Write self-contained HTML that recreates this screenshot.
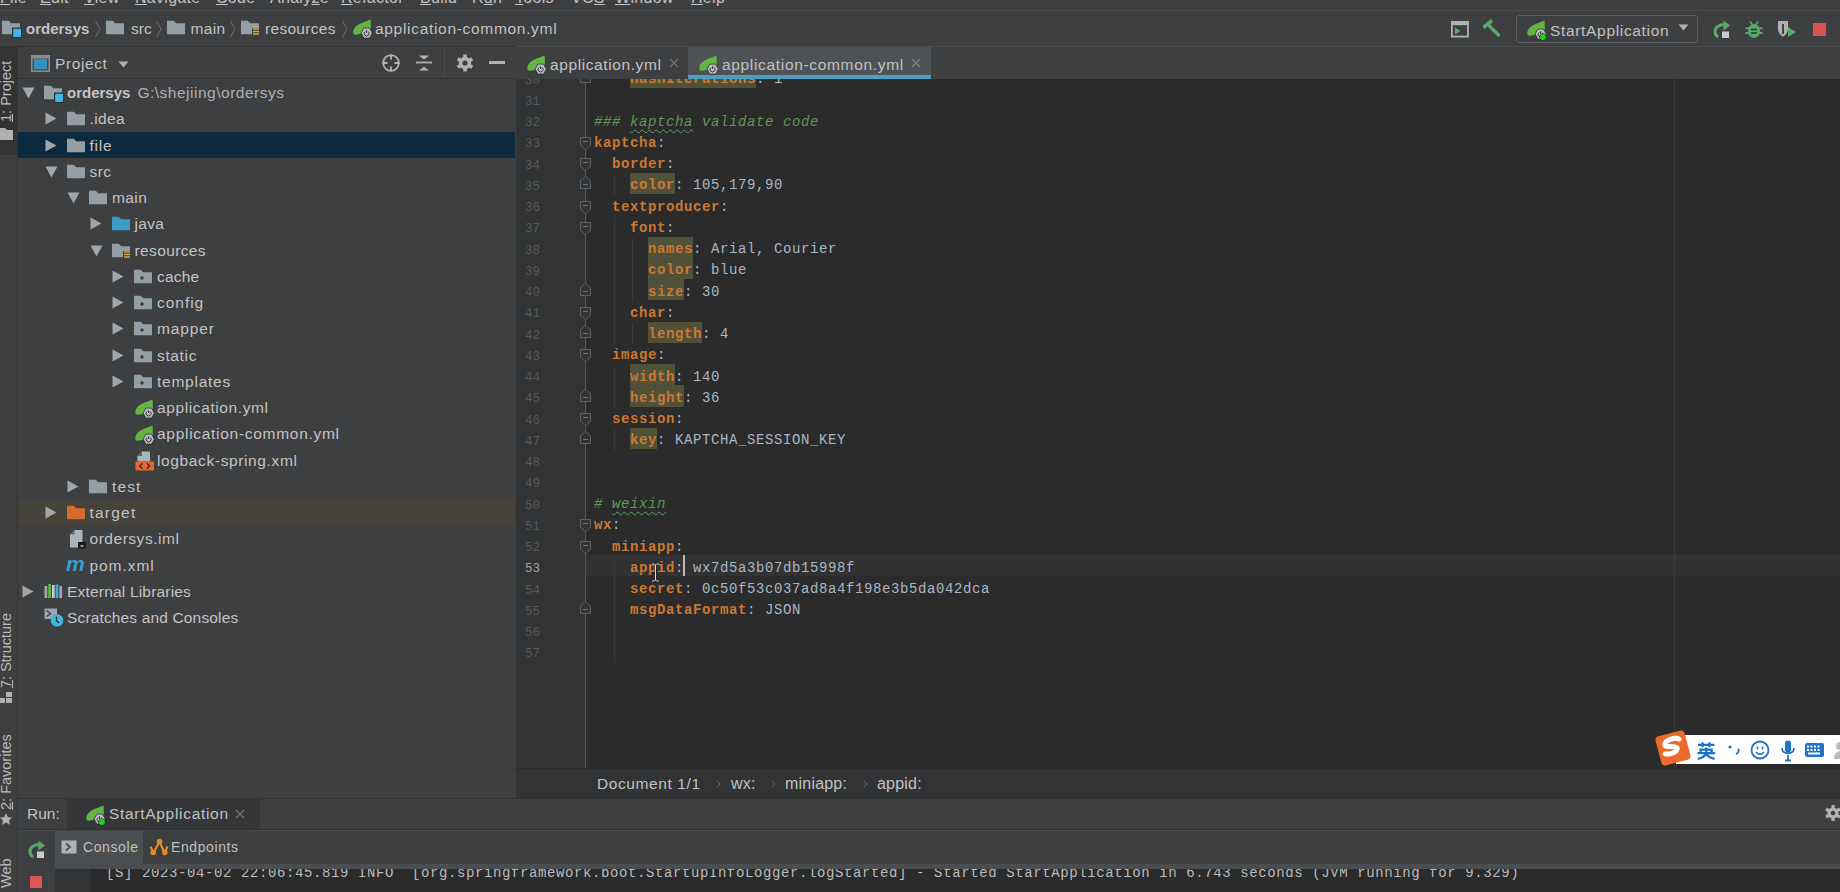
<!DOCTYPE html>
<html><head><meta charset="utf-8"><style>
*{margin:0;padding:0;box-sizing:border-box}
html,body{width:1840px;height:892px;overflow:hidden;background:#3E3F41}
body{position:relative;font-family:"Liberation Sans",sans-serif;color:#C2C2C2;font-size:16px}
.a{position:absolute}
svg{overflow:visible}
.t{position:absolute;white-space:pre;line-height:20px}
.u{text-decoration:underline;text-underline-offset:1px;text-decoration-thickness:1px}
.row{position:absolute;left:18px;width:497px;height:26.25px}
.tx{position:absolute;top:4px;white-space:pre;line-height:20px;font-size:15.5px;letter-spacing:0.3px;color:#C4C4C4}
.ic{position:absolute;top:5px;width:20px;height:17px}
.arr{position:absolute;width:12px;height:12px;top:7px}
.cl{position:absolute;left:0;height:21.25px;width:1250px;font-family:"Liberation Mono",monospace;font-size:14px;letter-spacing:0.6px;white-space:pre;line-height:21.25px}
.cl span{display:inline-block;height:21.25px;vertical-align:top}
.k{color:#CC7832;font-weight:bold}
.v{color:#A9B7C6}
.p{color:#CC7832}
.c{color:#629755;font-style:italic}
.hl{background:#4F4D3A}
.wv{text-decoration:underline wavy #659C6B;text-decoration-thickness:1px;text-underline-offset:3px}
.ln{position:absolute;left:516px;width:24px;text-align:right;font-family:"Liberation Mono",monospace;font-size:14px;color:#606366;height:21.25px;line-height:21.25px}
</style></head><body>
<svg width="0" height="0" style="position:absolute">
<defs>
<symbol id="fold" viewBox="0 0 20 17"><path d="M0 1.8h6.8l2.4 2.5H18V15.3H0z" fill="#939EA5"/></symbol>
<symbol id="foldj" viewBox="0 0 20 17"><path d="M0 1.8h6.8l2.4 2.5H18V15.3H0z" fill="#3D9BC9"/></symbol>
<symbol id="foldo" viewBox="0 0 20 17"><path d="M0 1.8h6.8l2.4 2.5H18V15.3H0z" fill="#D66A2E"/></symbol>
<symbol id="foldp" viewBox="0 0 20 17"><path d="M0 1.8h6.8l2.4 2.5H18V15.3H0z" fill="#939EA5"/><circle cx="8" cy="10" r="1.8" fill="#3E3F41"/></symbol>
<symbol id="foldr" viewBox="0 0 20 17"><path d="M0 1.8h6.8l2.4 2.5H18V15.3H0z" fill="#939EA5"/><rect x="11" y="9" width="8" height="8" fill="#3E3F41"/><path d="M12 10h6M12 12.5h6M12 15h6" stroke="#D9A343" stroke-width="1.6"/></symbol>
<symbol id="foldm" viewBox="0 0 20 17" style="overflow:visible"><path d="M0 1.8h6.8l2.4 2.5H18V15.3H0z" fill="#939EA5"/><rect x="10" y="8.5" width="10" height="10.5" fill="#2E3032"/><rect x="11.2" y="9.8" width="7.8" height="8.2" fill="#40B6E0"/></symbol>
<symbol id="spring" viewBox="0 0 20 20"><path d="M18.6 0.5C13.5 2.8 8 4 4.5 7 1.2 9.8 0.6 13.2 2.2 15.6 5 16.2 9 14.8 11.5 13.5L18.9 9.5z" fill="#62B543"/><path d="M20.3 14.1l-2.8 5h-5.6l-2.8-5 2.8-5h5.6z" fill="#B9BDC1" stroke="#303234" stroke-width="0.8"/><path d="M12.9 12.6a2.5 2.5 0 1 0 3.4 0" stroke="#2A2A2A" stroke-width="0.95" fill="none"/><path d="M14.6 11.2v2.8" stroke="#2A2A2A" stroke-width="0.95"/></symbol>
</defs></svg>
<div class="a" style="left:0;top:0;width:1840px;height:10px;overflow:hidden"><div class="t" style="left:0px;top:-12px;font-size:16px;letter-spacing:0.3px"><span class="u">F</span>ile</div><div class="t" style="left:40px;top:-12px;font-size:16px;letter-spacing:0.3px"><span class="u">E</span>dit</div><div class="t" style="left:84px;top:-12px;font-size:16px;letter-spacing:0.3px"><span class="u">V</span>iew</div><div class="t" style="left:135px;top:-12px;font-size:16px;letter-spacing:0.3px"><span class="u">N</span>avigate</div><div class="t" style="left:216px;top:-12px;font-size:16px;letter-spacing:0.3px"><span class="u">C</span>ode</div><div class="t" style="left:270px;top:-12px;font-size:16px;letter-spacing:0.3px">Analy<span class="u">z</span>e</div><div class="t" style="left:341px;top:-12px;font-size:16px;letter-spacing:0.3px"><span class="u">R</span>efactor</div><div class="t" style="left:420px;top:-12px;font-size:16px;letter-spacing:0.3px"><span class="u">B</span>uild</div><div class="t" style="left:472px;top:-12px;font-size:16px;letter-spacing:0.3px">R<span class="u">u</span>n</div><div class="t" style="left:515px;top:-12px;font-size:16px;letter-spacing:0.3px"><span class="u">T</span>ools</div><div class="t" style="left:571px;top:-12px;font-size:16px;letter-spacing:0.3px">VC<span class="u">S</span></div><div class="t" style="left:615px;top:-12px;font-size:16px;letter-spacing:0.3px"><span class="u">W</span>indow</div><div class="t" style="left:691px;top:-12px;font-size:16px;letter-spacing:0.3px"><span class="u">H</span>elp</div></div>
<div class="a" style="left:0;top:10px;width:1840px;height:1px;background:#4B4D4F"></div>
<svg class="a" style="left:2px;top:19px" width="22" height="19"><use href="#foldm" width="20" height="17"/></svg><div class="t" style="left:26px;top:19px;font-weight:bold;font-size:15px">ordersys</div><svg class="a" style="left:94px;top:19px" width="8" height="20"><path d="M1.5 2l4.5 8-4.5 8" stroke="#6E7072" stroke-width="1" fill="none"/></svg><svg class="a" style="left:106px;top:19px" width="20" height="17"><use href="#fold" width="20" height="17"/></svg><div class="t" style="left:131px;top:19px;font-size:15.5px;letter-spacing:0px">src</div><svg class="a" style="left:155px;top:19px" width="8" height="20"><path d="M1.5 2l4.5 8-4.5 8" stroke="#6E7072" stroke-width="1" fill="none"/></svg><svg class="a" style="left:167px;top:19px" width="20" height="17"><use href="#fold" width="20" height="17"/></svg><div class="t" style="left:190.5px;top:19px;font-size:15.5px;letter-spacing:0.3px">main</div><svg class="a" style="left:229px;top:19px" width="8" height="20"><path d="M1.5 2l4.5 8-4.5 8" stroke="#6E7072" stroke-width="1" fill="none"/></svg><svg class="a" style="left:241px;top:19px" width="20" height="17"><use href="#foldr" width="20" height="17"/></svg><div class="t" style="left:265px;top:19px;font-size:15.5px;letter-spacing:0.3px">resources</div><svg class="a" style="left:341px;top:19px" width="8" height="20"><path d="M1.5 2l4.5 8-4.5 8" stroke="#6E7072" stroke-width="1" fill="none"/></svg><svg class="a" style="left:352px;top:19px" width="20" height="20"><use href="#spring" width="20" height="20"/></svg><div class="t" style="left:375px;top:19px;font-size:15.5px;letter-spacing:0.69px">application-common.yml</div>
<div class="a" style="left:0;top:46px;width:1840px;height:1px;background:#323232"></div>
<svg class="a" style="left:1450px;top:20px" width="20" height="18"><rect x="1.9" y="2" width="16" height="14.6" fill="none" stroke="#AFB1B3" stroke-width="1.8"/><rect x="1" y="1.2" width="18" height="4" fill="#AFB1B3"/><path d="M5 7.5l5.5 3.5-5.5 3.5z" fill="#59A869"/></svg><svg class="a" style="left:1481px;top:19px" width="22" height="20"><path d="M2.5 8.5L11 1.5" stroke="#59A869" stroke-width="3.6" stroke-linecap="butt"/><path d="M6.5 5L18.5 17" stroke="#59A869" stroke-width="3.4" stroke-linecap="butt"/></svg><div class="a" style="left:1516px;top:15px;width:182px;height:28px;border:1px solid #5E6060;border-radius:3px"></div><svg class="a" style="left:1525.5px;top:19.5px" width="22" height="22"><use href="#spring" width="20" height="20"/><circle cx="17" cy="17" r="3.6" fill="#1E3A1E"/><circle cx="17" cy="17" r="2.9" fill="#22D322"/></svg><div class="t" style="left:1550px;top:20.5px;font-size:15.5px;letter-spacing:0.67px">StartApplication</div><svg class="a" style="left:1678px;top:24px" width="12" height="8"><path d="M0.5 0.5h10l-5 6z" fill="#AFB1B3"/></svg><svg class="a" style="left:1712px;top:20px" width="20" height="19"><path d="M14 5.2C8.5 3.8 3 6.5 3 11.5c0 2.6 1.4 4.5 3.2 5.5" stroke="#59A869" stroke-width="3" fill="none"/><path d="M11.5 0.5l6.5 5-6.5 5z" fill="#59A869"/><rect x="10" y="11.5" width="7" height="6.5" fill="#C9CBCD"/></svg><svg class="a" style="left:1745px;top:20px" width="18" height="19"><path d="M5 1.5l2.5 3.5M13 1.5l-2.5 3.5" stroke="#59A869" stroke-width="1.6"/><ellipse cx="9" cy="11" rx="6" ry="7" fill="#59A869"/><path d="M0.5 8.2h17M0.5 13h17" stroke="#59A869" stroke-width="2"/><path d="M6 9.5h6M6 13h6" stroke="#2A3A2A" stroke-width="1.6"/></svg><svg class="a" style="left:1776px;top:19px" width="22" height="20"><path d="M2 2h10v8c0 4-3 6-5 8-2-2-5-4-5-8z" fill="#AFB1B3"/><path d="M7 5v10" stroke="#3E3F41" stroke-width="2"/><path d="M12 8l8 5-8 5z" fill="#59A869"/></svg><div class="a" style="left:1812.5px;top:22.5px;width:13px;height:13px;background:#DB5050"></div>
<div class="a" style="left:17px;top:47px;width:1px;height:845px;background:#333436"></div><div class="a" style="left:0;top:47px;width:17px;height:108px;background:#313335"></div><div class="t" style="left:-1px;top:122px;font-size:14.5px;line-height:15px;transform-origin:0 0;transform:rotate(-90deg);color:#BBBBBB"><span class="u">1</span>: Project</div><svg class="a" style="left:0;top:127px" width="14" height="14"><path d="M0 1h5l2 2h6v10H0z" fill="#AFB1B3"/></svg><div class="t" style="left:-1px;top:688px;font-size:14.5px;line-height:15px;transform-origin:0 0;transform:rotate(-90deg);color:#BBBBBB"><span class="u">7</span>: Structure</div><svg class="a" style="left:0;top:690px" width="14" height="16"><rect x="6" y="2" width="6" height="5" fill="#AFB1B3"/><rect x="0" y="8" width="5" height="5" fill="#AFB1B3"/><rect x="6" y="8" width="6" height="5" fill="#AFB1B3"/></svg><div class="t" style="left:-1px;top:810px;font-size:14.5px;line-height:15px;transform-origin:0 0;transform:rotate(-90deg);color:#BBBBBB"><span class="u">2</span>: Favorites</div><svg class="a" style="left:0;top:812px" width="14" height="16"><path d="M6 1l1.8 4.2 4.5.3-3.4 3 1.1 4.4L6 10.5 2 12.9l1.1-4.4-3.4-3 4.5-.3z" fill="#AFB1B3"/></svg><div class="t" style="left:-1px;top:888px;font-size:14.5px;line-height:15px;transform-origin:0 0;transform:rotate(-90deg);color:#BBBBBB">Web</div><svg class="a" style="left:30.5px;top:55px" width="19" height="17"><rect x="0.8" y="0.8" width="17.4" height="15.4" fill="#43474A" stroke="#8A8D8F" stroke-width="1.6"/><rect x="1" y="1" width="17" height="2.5" fill="#8A8D8F"/><rect x="3" y="4.2" width="13" height="10" fill="#3592C0"/></svg><div class="t" style="left:55px;top:54px;font-size:15.5px;letter-spacing:0.6px">Project</div><svg class="a" style="left:118px;top:61px" width="12" height="8"><path d="M0.5 0.5h10l-5 6z" fill="#AFB1B3"/></svg><svg class="a" style="left:381px;top:53px" width="20" height="20"><circle cx="10" cy="10" r="7.8" fill="none" stroke="#AFB1B3" stroke-width="1.8"/><path d="M10 1.5v5M10 13.5v5M1.5 10h5M13.5 10h5" stroke="#AFB1B3" stroke-width="1.8"/></svg><svg class="a" style="left:415px;top:53px" width="18" height="20"><path d="M4 2.5h10l-5 4z" fill="#AFB1B3"/><path d="M1 9.5h16" stroke="#AFB1B3" stroke-width="1.8"/><path d="M4 17.5h10l-5-4z" fill="#AFB1B3"/></svg><div class="a" style="left:444px;top:48px;width:1px;height:29px;background:#4A4C4E"></div><svg class="a" style="left:455px;top:53px" width="20" height="20"><g fill="#AFB1B3"><circle cx="10" cy="10" r="6.2"/><path d="M8.2 1.5h3.6v4h-3.6zM8.2 14.5h3.6v4h-3.6z"/><path d="M8.2 1.5h3.6v4h-3.6zM8.2 14.5h3.6v4h-3.6z" transform="rotate(60 10 10)"/><path d="M8.2 1.5h3.6v4h-3.6zM8.2 14.5h3.6v4h-3.6z" transform="rotate(120 10 10)"/></g><circle cx="10" cy="10" r="2.6" fill="#3E3F41"/></svg><div class="a" style="left:489px;top:61px;width:16px;height:3px;background:#AFB1B3"></div><div class="a" style="left:18px;top:78px;width:498px;height:1px;background:#323232"></div>
<div class="a" style="left:18px;top:131.5px;width:497px;height:26.25px;background:#0D293E"></div><div class="a" style="left:18px;top:499px;width:497px;height:26.25px;background:#45433A"></div><div class="a" style="left:0;top:79.00px;width:515px;height:26.25px"><svg class="a" style="left:22.0px;top:8px" width="13" height="12"><path d="M0.5 0.5h12L6.5 11.5z" fill="#A3A6A8"/></svg><svg class="a" style="left:44.0px;top:5px" width="20" height="17"><use href="#foldm" width="20" height="17"/></svg><div class="tx" style="left:67.0px"><b style="letter-spacing:0;font-size:15px">ordersys</b><span style="color:#ADAFB1;margin-left:7px;letter-spacing:0.51px">G:\shejiing\ordersys</span></div></div>
<div class="a" style="left:0;top:105.25px;width:515px;height:26.25px"><svg class="a" style="left:44.5px;top:7px" width="12" height="13"><path d="M0.5 0.5L11.5 6.5 0.5 12.5z" fill="#A3A6A8"/></svg><svg class="a" style="left:66.5px;top:5px" width="20" height="17"><use href="#fold" width="20" height="17"/></svg><div class="tx" style="left:89.5px;letter-spacing:0.35px">.idea</div></div>
<div class="a" style="left:0;top:131.50px;width:515px;height:26.25px"><svg class="a" style="left:44.5px;top:7px" width="12" height="13"><path d="M0.5 0.5L11.5 6.5 0.5 12.5z" fill="#A3A6A8"/></svg><svg class="a" style="left:66.5px;top:5px" width="20" height="17"><use href="#fold" width="20" height="17"/></svg><div class="tx" style="left:89.5px;letter-spacing:0.8px">file</div></div>
<div class="a" style="left:0;top:157.75px;width:515px;height:26.25px"><svg class="a" style="left:44.5px;top:8px" width="13" height="12"><path d="M0.5 0.5h12L6.5 11.5z" fill="#A3A6A8"/></svg><svg class="a" style="left:66.5px;top:5px" width="20" height="17"><use href="#fold" width="20" height="17"/></svg><div class="tx" style="left:89.5px;letter-spacing:0.42px">src</div></div>
<div class="a" style="left:0;top:184.00px;width:515px;height:26.25px"><svg class="a" style="left:67.0px;top:8px" width="13" height="12"><path d="M0.5 0.5h12L6.5 11.5z" fill="#A3A6A8"/></svg><svg class="a" style="left:89.0px;top:5px" width="20" height="17"><use href="#fold" width="20" height="17"/></svg><div class="tx" style="left:112.0px;letter-spacing:0.4px">main</div></div>
<div class="a" style="left:0;top:210.25px;width:515px;height:26.25px"><svg class="a" style="left:89.5px;top:7px" width="12" height="13"><path d="M0.5 0.5L11.5 6.5 0.5 12.5z" fill="#A3A6A8"/></svg><svg class="a" style="left:111.5px;top:5px" width="20" height="17"><use href="#foldj" width="20" height="17"/></svg><div class="tx" style="left:134.5px;letter-spacing:0.32px">java</div></div>
<div class="a" style="left:0;top:236.50px;width:515px;height:26.25px"><svg class="a" style="left:89.5px;top:8px" width="13" height="12"><path d="M0.5 0.5h12L6.5 11.5z" fill="#A3A6A8"/></svg><svg class="a" style="left:111.5px;top:5px" width="20" height="17"><use href="#foldr" width="20" height="17"/></svg><div class="tx" style="left:134.5px;letter-spacing:0.38px">resources</div></div>
<div class="a" style="left:0;top:262.75px;width:515px;height:26.25px"><svg class="a" style="left:112.0px;top:7px" width="12" height="13"><path d="M0.5 0.5L11.5 6.5 0.5 12.5z" fill="#A3A6A8"/></svg><svg class="a" style="left:134.0px;top:5px" width="20" height="17"><use href="#foldp" width="20" height="17"/></svg><div class="tx" style="left:157.0px;letter-spacing:0.18px">cache</div></div>
<div class="a" style="left:0;top:289.00px;width:515px;height:26.25px"><svg class="a" style="left:112.0px;top:7px" width="12" height="13"><path d="M0.5 0.5L11.5 6.5 0.5 12.5z" fill="#A3A6A8"/></svg><svg class="a" style="left:134.0px;top:5px" width="20" height="17"><use href="#foldp" width="20" height="17"/></svg><div class="tx" style="left:157.0px;letter-spacing:0.97px">config</div></div>
<div class="a" style="left:0;top:315.25px;width:515px;height:26.25px"><svg class="a" style="left:112.0px;top:7px" width="12" height="13"><path d="M0.5 0.5L11.5 6.5 0.5 12.5z" fill="#A3A6A8"/></svg><svg class="a" style="left:134.0px;top:5px" width="20" height="17"><use href="#foldp" width="20" height="17"/></svg><div class="tx" style="left:157.0px;letter-spacing:0.89px">mapper</div></div>
<div class="a" style="left:0;top:341.50px;width:515px;height:26.25px"><svg class="a" style="left:112.0px;top:7px" width="12" height="13"><path d="M0.5 0.5L11.5 6.5 0.5 12.5z" fill="#A3A6A8"/></svg><svg class="a" style="left:134.0px;top:5px" width="20" height="17"><use href="#foldp" width="20" height="17"/></svg><div class="tx" style="left:157.0px;letter-spacing:0.64px">static</div></div>
<div class="a" style="left:0;top:367.75px;width:515px;height:26.25px"><svg class="a" style="left:112.0px;top:7px" width="12" height="13"><path d="M0.5 0.5L11.5 6.5 0.5 12.5z" fill="#A3A6A8"/></svg><svg class="a" style="left:134.0px;top:5px" width="20" height="17"><use href="#foldp" width="20" height="17"/></svg><div class="tx" style="left:157.0px;letter-spacing:0.75px">templates</div></div>
<div class="a" style="left:0;top:394.00px;width:515px;height:26.25px"><svg class="a" style="left:134.0px;top:5px" width="20" height="20"><use href="#spring" width="20" height="20"/></svg><div class="tx" style="left:157.0px;letter-spacing:0.61px">application.yml</div></div>
<div class="a" style="left:0;top:420.25px;width:515px;height:26.25px"><svg class="a" style="left:134.0px;top:5px" width="20" height="20"><use href="#spring" width="20" height="20"/></svg><div class="tx" style="left:157.0px;letter-spacing:0.71px">application-common.yml</div></div>
<div class="a" style="left:0;top:446.50px;width:515px;height:26.25px"><svg class="a" style="left:134.0px;top:4.5px" width="21" height="20"><path d="M8 0.5h8v10H3.5V5z" fill="#A9B4BB"/><path d="M3.5 5L8 0.5V5z" fill="#5F676C"/><rect x="1.5" y="10.5" width="18.5" height="9" fill="#E5672F"/><path d="M8.5 12.3l-2.8 2.7 2.8 2.7M12.8 12.3l2.8 2.7-2.8 2.7" stroke="#3A2A20" stroke-width="1.2" fill="none"/></svg><div class="tx" style="left:157.0px;letter-spacing:0.63px">logback-spring.xml</div></div>
<div class="a" style="left:0;top:472.75px;width:515px;height:26.25px"><svg class="a" style="left:67.0px;top:7px" width="12" height="13"><path d="M0.5 0.5L11.5 6.5 0.5 12.5z" fill="#A3A6A8"/></svg><svg class="a" style="left:89.0px;top:5px" width="20" height="17"><use href="#fold" width="20" height="17"/></svg><div class="tx" style="left:112.0px;letter-spacing:1.11px">test</div></div>
<div class="a" style="left:0;top:499.00px;width:515px;height:26.25px"><svg class="a" style="left:44.5px;top:7px" width="12" height="13"><path d="M0.5 0.5L11.5 6.5 0.5 12.5z" fill="#A3A6A8"/></svg><svg class="a" style="left:66.5px;top:5px" width="20" height="17"><use href="#foldo" width="20" height="17"/></svg><div class="tx" style="left:89.5px;letter-spacing:1.21px">target</div></div>
<div class="a" style="left:0;top:525.25px;width:515px;height:26.25px"><svg class="a" style="left:66.5px;top:4px" width="20" height="20"><path d="M7.5 1h8v17.5H3V5.5z" fill="#A9B4BB"/><path d="M3 5.5L7.5 1v4.5z" fill="#5F676C"/><rect x="11" y="13" width="8" height="6.5" fill="#1A1A1A"/><rect x="13.5" y="16.3" width="3" height="1.4" fill="#D0D0D0"/></svg><div class="tx" style="left:89.5px;letter-spacing:0.53px">ordersys.iml</div></div>
<div class="a" style="left:0;top:551.50px;width:515px;height:26.25px"><div class="a" style="left:66.0px;top:0px;font-style:italic;font-weight:bold;font-size:21px;line-height:24px;color:#3A9FD0;font-family:&quot;Liberation Sans&quot;,sans-serif">m</div><div class="tx" style="left:89.5px;letter-spacing:0.94px">pom.xml</div></div>
<div class="a" style="left:0;top:577.75px;width:515px;height:26.25px"><svg class="a" style="left:22.0px;top:7px" width="12" height="13"><path d="M0.5 0.5L11.5 6.5 0.5 12.5z" fill="#A3A6A8"/></svg><svg class="a" style="left:43.5px;top:4px" width="20" height="20"><rect x="0.5" y="4" width="2.8" height="12" fill="#9AA7B0"/><rect x="4.2" y="2" width="2.8" height="14" fill="#62B543"/><rect x="7.9" y="3" width="2.8" height="13" fill="#C5CCD0"/><rect x="11.6" y="2.5" width="2.8" height="13.5" fill="#40A8D8"/><rect x="15.3" y="4" width="2.8" height="12" fill="#9AA7B0"/></svg><div class="tx" style="left:67.0px;letter-spacing:0.19px">External Libraries</div></div>
<div class="a" style="left:0;top:604.00px;width:515px;height:26.25px"><svg class="a" style="left:43.5px;top:3px" width="22" height="22"><rect x="0.5" y="1.5" width="12.5" height="10.5" fill="#9AA7B0"/><path d="M2.5 3.5l4 3-4 3" stroke="#3E3F41" stroke-width="1.4" fill="none"/><circle cx="13" cy="13.5" r="6.2" fill="#40B6E0"/><path d="M12.5 9.5v4.3l2.6 2.2" stroke="#2B2B2B" stroke-width="1.4" fill="none"/></svg><div class="tx" style="left:67.0px;letter-spacing:0.15px">Scratches and Consoles</div></div>
<div class="a" style="left:516px;top:47px;width:1324px;height:32px;background:#3E3F41"></div><div class="a" style="left:688px;top:47px;width:243px;height:31px;background:#4E5254"></div><div class="a" style="left:688px;top:74.5px;width:243px;height:4px;background:#4AA0C2"></div><svg class="a" style="left:526px;top:55px" width="20" height="20"><use href="#spring" width="20" height="20"/></svg><div class="t" style="left:550px;top:54.5px;font-size:15.5px;letter-spacing:0.6px">application.yml</div><svg class="a" style="left:669px;top:58px" width="10" height="10"><path d="M1 1l8 8M9 1l-8 8" stroke="#6E7072" stroke-width="1.3"/></svg><svg class="a" style="left:698px;top:55px" width="20" height="20"><use href="#spring" width="20" height="20"/></svg><div class="t" style="left:722px;top:54.5px;font-size:15.5px;letter-spacing:0.67px">application-common.yml</div><svg class="a" style="left:911px;top:58px" width="10" height="10"><path d="M1 1l8 8M9 1l-8 8" stroke="#7E8082" stroke-width="1.3"/></svg><div class="a" style="left:516px;top:78.5px;width:1324px;height:1px;background:#4D4F51"></div><div class="a" style="left:516px;top:46px;width:1324px;height:1px;background:#4A4C4E"></div>
<div class="a" style="left:516px;top:79px;width:1324px;height:689px;background:#2B2B2B;overflow:hidden"><div class="a" style="left:0;top:0;width:70px;height:689px;background:#313335"></div><div class="a" style="left:70px;top:475.88px;width:1254px;height:21.25px;background:#323232"></div><div class="a" style="left:1158px;top:0;width:1px;height:689px;background:#3B3B3B"></div><div class="a" style="left:69px;top:0;width:1px;height:689px;background:#555759"></div><div class="a" style="left:98px;top:95.38px;width:1px;height:21.25px;background:#393939"></div><div class="a" style="left:98px;top:137.88px;width:1px;height:127.50px;background:#393939"></div><div class="a" style="left:116px;top:159.12px;width:1px;height:63.75px;background:#393939"></div><div class="a" style="left:116px;top:244.12px;width:1px;height:21.25px;background:#393939"></div><div class="a" style="left:98px;top:286.62px;width:1px;height:42.50px;background:#393939"></div><div class="a" style="left:98px;top:350.38px;width:1px;height:21.25px;background:#393939"></div><div class="a" style="left:98px;top:477.88px;width:1px;height:106.25px;background:#393939"></div><div class="a" style="left:114px;top:-12.38px;width:126px;height:21.25px;background:#51513A"></div><div class="a" style="left:114px;top:93.88px;width:45px;height:21.25px;background:#51513A"></div><div class="a" style="left:132px;top:157.62px;width:45px;height:21.25px;background:#51513A"></div><div class="a" style="left:132px;top:178.88px;width:45px;height:21.25px;background:#51513A"></div><div class="a" style="left:132px;top:200.12px;width:36px;height:21.25px;background:#51513A"></div><div class="a" style="left:132px;top:242.62px;width:54px;height:21.25px;background:#51513A"></div><div class="a" style="left:114px;top:285.12px;width:45px;height:21.25px;background:#51513A"></div><div class="a" style="left:114px;top:306.38px;width:54px;height:21.25px;background:#51513A"></div><div class="a" style="left:114px;top:348.88px;width:27px;height:21.25px;background:#51513A"></div><div class="a" style="left:0;top:-8.38px;width:24px;text-align:right;font-family:&quot;Liberation Mono&quot;,monospace;font-size:12.5px;line-height:21.25px;color:#56595B">30</div><div class="cl" style="left:78px;top:-9.88px"><span class="">    </span><span class="k ">hashIterations</span><span class="v">:</span><span class="v"> 1</span></div><div class="a" style="left:0;top:12.88px;width:24px;text-align:right;font-family:&quot;Liberation Mono&quot;,monospace;font-size:12.5px;line-height:21.25px;color:#56595B">31</div><div class="cl" style="left:78px;top:11.38px"></div><div class="a" style="left:0;top:34.12px;width:24px;text-align:right;font-family:&quot;Liberation Mono&quot;,monospace;font-size:12.5px;line-height:21.25px;color:#56595B">32</div><div class="cl" style="left:78px;top:32.62px"><span class="c">### </span><span class="c wv">kaptcha</span><span class="c"> validate code</span></div><div class="a" style="left:0;top:55.38px;width:24px;text-align:right;font-family:&quot;Liberation Mono&quot;,monospace;font-size:12.5px;line-height:21.25px;color:#56595B">33</div><div class="cl" style="left:78px;top:53.88px"><span class="k">kaptcha</span><span class="v">:</span></div><div class="a" style="left:0;top:76.62px;width:24px;text-align:right;font-family:&quot;Liberation Mono&quot;,monospace;font-size:12.5px;line-height:21.25px;color:#56595B">34</div><div class="cl" style="left:78px;top:75.12px"><span class="">  </span><span class="k">border</span><span class="v">:</span></div><div class="a" style="left:0;top:97.88px;width:24px;text-align:right;font-family:&quot;Liberation Mono&quot;,monospace;font-size:12.5px;line-height:21.25px;color:#56595B">35</div><div class="cl" style="left:78px;top:96.38px"><span class="">    </span><span class="k ">color</span><span class="v">: 105,179,90</span></div><div class="a" style="left:0;top:119.12px;width:24px;text-align:right;font-family:&quot;Liberation Mono&quot;,monospace;font-size:12.5px;line-height:21.25px;color:#56595B">36</div><div class="cl" style="left:78px;top:117.62px"><span class="">  </span><span class="k">textproducer</span><span class="v">:</span></div><div class="a" style="left:0;top:140.38px;width:24px;text-align:right;font-family:&quot;Liberation Mono&quot;,monospace;font-size:12.5px;line-height:21.25px;color:#56595B">37</div><div class="cl" style="left:78px;top:138.88px"><span class="">    </span><span class="k">font</span><span class="v">:</span></div><div class="a" style="left:0;top:161.62px;width:24px;text-align:right;font-family:&quot;Liberation Mono&quot;,monospace;font-size:12.5px;line-height:21.25px;color:#56595B">38</div><div class="cl" style="left:78px;top:160.12px"><span class="">      </span><span class="k ">names</span><span class="v">: Arial, Courier</span></div><div class="a" style="left:0;top:182.88px;width:24px;text-align:right;font-family:&quot;Liberation Mono&quot;,monospace;font-size:12.5px;line-height:21.25px;color:#56595B">39</div><div class="cl" style="left:78px;top:181.38px"><span class="">      </span><span class="k ">color</span><span class="v">: blue</span></div><div class="a" style="left:0;top:204.12px;width:24px;text-align:right;font-family:&quot;Liberation Mono&quot;,monospace;font-size:12.5px;line-height:21.25px;color:#56595B">40</div><div class="cl" style="left:78px;top:202.62px"><span class="">      </span><span class="k ">size</span><span class="v">: 30</span></div><div class="a" style="left:0;top:225.38px;width:24px;text-align:right;font-family:&quot;Liberation Mono&quot;,monospace;font-size:12.5px;line-height:21.25px;color:#56595B">41</div><div class="cl" style="left:78px;top:223.88px"><span class="">    </span><span class="k">char</span><span class="v">:</span></div><div class="a" style="left:0;top:246.62px;width:24px;text-align:right;font-family:&quot;Liberation Mono&quot;,monospace;font-size:12.5px;line-height:21.25px;color:#56595B">42</div><div class="cl" style="left:78px;top:245.12px"><span class="">      </span><span class="k ">length</span><span class="v">: 4</span></div><div class="a" style="left:0;top:267.88px;width:24px;text-align:right;font-family:&quot;Liberation Mono&quot;,monospace;font-size:12.5px;line-height:21.25px;color:#56595B">43</div><div class="cl" style="left:78px;top:266.38px"><span class="">  </span><span class="k">image</span><span class="v">:</span></div><div class="a" style="left:0;top:289.12px;width:24px;text-align:right;font-family:&quot;Liberation Mono&quot;,monospace;font-size:12.5px;line-height:21.25px;color:#56595B">44</div><div class="cl" style="left:78px;top:287.62px"><span class="">    </span><span class="k ">width</span><span class="v">: 140</span></div><div class="a" style="left:0;top:310.38px;width:24px;text-align:right;font-family:&quot;Liberation Mono&quot;,monospace;font-size:12.5px;line-height:21.25px;color:#56595B">45</div><div class="cl" style="left:78px;top:308.88px"><span class="">    </span><span class="k ">height</span><span class="v">: 36</span></div><div class="a" style="left:0;top:331.62px;width:24px;text-align:right;font-family:&quot;Liberation Mono&quot;,monospace;font-size:12.5px;line-height:21.25px;color:#56595B">46</div><div class="cl" style="left:78px;top:330.12px"><span class="">  </span><span class="k">session</span><span class="v">:</span></div><div class="a" style="left:0;top:352.88px;width:24px;text-align:right;font-family:&quot;Liberation Mono&quot;,monospace;font-size:12.5px;line-height:21.25px;color:#56595B">47</div><div class="cl" style="left:78px;top:351.38px"><span class="">    </span><span class="k ">key</span><span class="v">: KAPTCHA_SESSION_KEY</span></div><div class="a" style="left:0;top:374.12px;width:24px;text-align:right;font-family:&quot;Liberation Mono&quot;,monospace;font-size:12.5px;line-height:21.25px;color:#56595B">48</div><div class="cl" style="left:78px;top:372.62px"></div><div class="a" style="left:0;top:395.38px;width:24px;text-align:right;font-family:&quot;Liberation Mono&quot;,monospace;font-size:12.5px;line-height:21.25px;color:#56595B">49</div><div class="cl" style="left:78px;top:393.88px"></div><div class="a" style="left:0;top:416.62px;width:24px;text-align:right;font-family:&quot;Liberation Mono&quot;,monospace;font-size:12.5px;line-height:21.25px;color:#56595B">50</div><div class="cl" style="left:78px;top:415.12px"><span class="c"># </span><span class="c wv">weixin</span></div><div class="a" style="left:0;top:437.88px;width:24px;text-align:right;font-family:&quot;Liberation Mono&quot;,monospace;font-size:12.5px;line-height:21.25px;color:#56595B">51</div><div class="cl" style="left:78px;top:436.38px"><span class="k">wx</span><span class="v">:</span></div><div class="a" style="left:0;top:459.12px;width:24px;text-align:right;font-family:&quot;Liberation Mono&quot;,monospace;font-size:12.5px;line-height:21.25px;color:#56595B">52</div><div class="cl" style="left:78px;top:457.62px"><span class="">  </span><span class="k">miniapp</span><span class="v">:</span></div><div class="a" style="left:0;top:480.38px;width:24px;text-align:right;font-family:&quot;Liberation Mono&quot;,monospace;font-size:12.5px;line-height:21.25px;color:#A4A3A3">53</div><div class="cl" style="left:78px;top:478.88px"><span class="">    </span><span class="k">appid</span><span class="v">:</span><span class="v"> wx7d5a3b07db15998f</span></div><div class="a" style="left:0;top:501.62px;width:24px;text-align:right;font-family:&quot;Liberation Mono&quot;,monospace;font-size:12.5px;line-height:21.25px;color:#56595B">54</div><div class="cl" style="left:78px;top:500.12px"><span class="">    </span><span class="k">secret</span><span class="v">:</span><span class="v"> 0c50f53c037ad8a4f198e3b5da042dca</span></div><div class="a" style="left:0;top:522.88px;width:24px;text-align:right;font-family:&quot;Liberation Mono&quot;,monospace;font-size:12.5px;line-height:21.25px;color:#56595B">55</div><div class="cl" style="left:78px;top:521.38px"><span class="">    </span><span class="k">msgDataFormat</span><span class="v">:</span><span class="v"> JSON</span></div><div class="a" style="left:0;top:544.12px;width:24px;text-align:right;font-family:&quot;Liberation Mono&quot;,monospace;font-size:12.5px;line-height:21.25px;color:#56595B">56</div><div class="cl" style="left:78px;top:542.62px"></div><div class="a" style="left:0;top:565.38px;width:24px;text-align:right;font-family:&quot;Liberation Mono&quot;,monospace;font-size:12.5px;line-height:21.25px;color:#56595B">57</div><div class="cl" style="left:78px;top:563.88px"></div><svg class="a" style="left:63px;top:56.88px" width="13" height="15"><path d="M1.5 1.5h10v7.5l-5 5-5-5z" fill="#313335" stroke="#5F6265" stroke-width="1"/><path d="M4 5.5h5" stroke="#6F7275" stroke-width="1"/></svg><svg class="a" style="left:63px;top:78.12px" width="13" height="15"><path d="M1.5 1.5h10v7.5l-5 5-5-5z" fill="#313335" stroke="#5F6265" stroke-width="1"/><path d="M4 5.5h5" stroke="#6F7275" stroke-width="1"/></svg><svg class="a" style="left:63px;top:120.62px" width="13" height="15"><path d="M1.5 1.5h10v7.5l-5 5-5-5z" fill="#313335" stroke="#5F6265" stroke-width="1"/><path d="M4 5.5h5" stroke="#6F7275" stroke-width="1"/></svg><svg class="a" style="left:63px;top:141.88px" width="13" height="15"><path d="M1.5 1.5h10v7.5l-5 5-5-5z" fill="#313335" stroke="#5F6265" stroke-width="1"/><path d="M4 5.5h5" stroke="#6F7275" stroke-width="1"/></svg><svg class="a" style="left:63px;top:226.88px" width="13" height="15"><path d="M1.5 1.5h10v7.5l-5 5-5-5z" fill="#313335" stroke="#5F6265" stroke-width="1"/><path d="M4 5.5h5" stroke="#6F7275" stroke-width="1"/></svg><svg class="a" style="left:63px;top:269.38px" width="13" height="15"><path d="M1.5 1.5h10v7.5l-5 5-5-5z" fill="#313335" stroke="#5F6265" stroke-width="1"/><path d="M4 5.5h5" stroke="#6F7275" stroke-width="1"/></svg><svg class="a" style="left:63px;top:333.12px" width="13" height="15"><path d="M1.5 1.5h10v7.5l-5 5-5-5z" fill="#313335" stroke="#5F6265" stroke-width="1"/><path d="M4 5.5h5" stroke="#6F7275" stroke-width="1"/></svg><svg class="a" style="left:63px;top:439.38px" width="13" height="15"><path d="M1.5 1.5h10v7.5l-5 5-5-5z" fill="#313335" stroke="#5F6265" stroke-width="1"/><path d="M4 5.5h5" stroke="#6F7275" stroke-width="1"/></svg><svg class="a" style="left:63px;top:460.62px" width="13" height="15"><path d="M1.5 1.5h10v7.5l-5 5-5-5z" fill="#313335" stroke="#5F6265" stroke-width="1"/><path d="M4 5.5h5" stroke="#6F7275" stroke-width="1"/></svg><svg class="a" style="left:63px;top:-9.88px" width="13" height="15"><path d="M1.5 13.5h10V6l-5-5-5 5z" fill="#313335" stroke="#5F6265" stroke-width="1"/><path d="M4 9.5h5" stroke="#6F7275" stroke-width="1"/></svg><svg class="a" style="left:63px;top:96.38px" width="13" height="15"><path d="M1.5 13.5h10V6l-5-5-5 5z" fill="#313335" stroke="#5F6265" stroke-width="1"/><path d="M4 9.5h5" stroke="#6F7275" stroke-width="1"/></svg><svg class="a" style="left:63px;top:202.62px" width="13" height="15"><path d="M1.5 13.5h10V6l-5-5-5 5z" fill="#313335" stroke="#5F6265" stroke-width="1"/><path d="M4 9.5h5" stroke="#6F7275" stroke-width="1"/></svg><svg class="a" style="left:63px;top:245.12px" width="13" height="15"><path d="M1.5 13.5h10V6l-5-5-5 5z" fill="#313335" stroke="#5F6265" stroke-width="1"/><path d="M4 9.5h5" stroke="#6F7275" stroke-width="1"/></svg><svg class="a" style="left:63px;top:308.88px" width="13" height="15"><path d="M1.5 13.5h10V6l-5-5-5 5z" fill="#313335" stroke="#5F6265" stroke-width="1"/><path d="M4 9.5h5" stroke="#6F7275" stroke-width="1"/></svg><svg class="a" style="left:63px;top:351.38px" width="13" height="15"><path d="M1.5 13.5h10V6l-5-5-5 5z" fill="#313335" stroke="#5F6265" stroke-width="1"/><path d="M4 9.5h5" stroke="#6F7275" stroke-width="1"/></svg><svg class="a" style="left:63px;top:521.38px" width="13" height="15"><path d="M1.5 13.5h10V6l-5-5-5 5z" fill="#313335" stroke="#5F6265" stroke-width="1"/><path d="M4 9.5h5" stroke="#6F7275" stroke-width="1"/></svg><div class="a" style="left:167px;top:475.88px;width:2px;height:21px;background:#BBBBBB"></div><svg class="a" style="left:135px;top:483.88px" width="9" height="19"><path d="M1 1h2.5l1 1 1-1H8M4.5 2v15M1 18h2.5l1-1 1 1H8" stroke="#1E1E1E" stroke-width="2" fill="none"/><path d="M1 1h2.5l1 1 1-1H8M4.5 2v15M1 18h2.5l1-1 1 1H8" stroke="#DDDDDD" stroke-width="1" fill="none"/></svg></div>
<div class="a" style="left:1676px;top:735px;width:164px;height:29px;background:#FFFFFF"></div><svg class="a" style="left:1652px;top:728px" width="42" height="40"><g transform="rotate(-15 21 20)"><rect x="6" y="5" width="30" height="30" rx="4" fill="#EE6A2C"/><path d="M29 13c-3-3-14-3-15 1.5-1 4 11 3 11 7-1 4-9 4-13 2" stroke="#FFFFFF" stroke-width="5" fill="none" stroke-linecap="round"/></g></svg><svg class="a" style="left:1697px;top:742px" width="19" height="18"><g stroke="#1F72C7" stroke-width="2.3" fill="none" stroke-linecap="butt"><path d="M1 2.8h16.5M5.5 0.3v5M12.5 0.3v5"/><path d="M3.6 11V7.6h11v3.4M0.6 11.2h17.6M9.2 5.5v5.7"/><path d="M9 11.5C8 14 5 16 0.8 16.8M9.4 11.5c1 2.5 4 4.5 8.2 5.3"/></g></svg><svg class="a" style="left:1727px;top:742px" width="16" height="16"><circle cx="3" cy="5" r="1.6" fill="#1F72C7"/><path d="M11 7c1.5 1 .5 4-2 5" stroke="#1F72C7" stroke-width="2" fill="none"/></svg><svg class="a" style="left:1750px;top:740px" width="20" height="20"><circle cx="10" cy="10" r="8.5" fill="none" stroke="#1F72C7" stroke-width="1.8"/><path d="M7.5 6.5v3M12.5 6.5v3" stroke="#1F72C7" stroke-width="1.6"/><path d="M6.2 12c2 3 5.6 3 7.6 0" stroke="#1F72C7" stroke-width="1.6" fill="none"/></svg><svg class="a" style="left:1779px;top:740px" width="18" height="22"><rect x="6" y="0.5" width="6" height="12" rx="3" fill="#1F72C7"/><path d="M3 8c0 7 12 7 12 0M9 15v5M6 20.5h6" stroke="#1F72C7" stroke-width="1.8" fill="none"/></svg><svg class="a" style="left:1804px;top:742px" width="22" height="17"><rect x="1" y="1" width="19" height="14" rx="2" fill="#1F72C7"/><g fill="#FFFFFF"><rect x="3" y="3.5" width="2" height="2"/><rect x="6.5" y="3.5" width="2" height="2"/><rect x="10" y="3.5" width="2" height="2"/><rect x="13.5" y="3.5" width="2" height="2"/><rect x="3" y="7" width="2" height="2"/><rect x="6.5" y="7" width="2" height="2"/><rect x="10" y="7" width="2" height="2"/><rect x="13.5" y="7" width="2" height="2"/><rect x="4" y="10.5" width="12" height="2"/></g></svg><svg class="a" style="left:1834px;top:741px" width="6" height="20"><circle cx="6" cy="5" r="4" fill="#B8BEC6"/><path d="M0 18c0-6 4-8 6-8s6 2 6 8z" fill="#B8BEC6"/></svg>
<div class="a" style="left:516px;top:768px;width:1324px;height:30px;background:#313335"></div><div class="a" style="left:516px;top:768px;width:1324px;height:1px;background:#2A2A2A"></div><div class="t" style="left:597px;top:774px;font-size:15.5px;letter-spacing:0.6px">Document 1/1</div><svg class="a" style="left:716px;top:780px" width="6" height="8"><path d="M1 0.8l2.8 3.2L1 7.2" stroke="#65676A" stroke-width="1" fill="none"/></svg><div class="t" style="left:731px;top:774px;font-size:16px;letter-spacing:0.2px">wx:</div><svg class="a" style="left:771px;top:780px" width="6" height="8"><path d="M1 0.8l2.8 3.2L1 7.2" stroke="#65676A" stroke-width="1" fill="none"/></svg><div class="t" style="left:785px;top:774px;font-size:16px;letter-spacing:0.2px">miniapp:</div><svg class="a" style="left:863px;top:780px" width="6" height="8"><path d="M1 0.8l2.8 3.2L1 7.2" stroke="#65676A" stroke-width="1" fill="none"/></svg><div class="t" style="left:877px;top:774px;font-size:16px;letter-spacing:0.2px">appid:</div>
<div class="a" style="left:18px;top:798px;width:1822px;height:31px;background:#3E3F41"></div><div class="a" style="left:18px;top:798px;width:1822px;height:1px;background:#323232"></div><div class="a" style="left:67px;top:798px;width:193px;height:31px;background:#343638"></div><div class="t" style="left:27px;top:804px;font-size:15.5px;letter-spacing:0px">Run:</div><svg class="a" style="left:85px;top:805px" width="22" height="22"><use href="#spring" width="20" height="20"/><circle cx="17" cy="17" r="3.6" fill="#1E3A1E"/><circle cx="17" cy="17" r="2.9" fill="#22D322"/></svg><div class="t" style="left:109px;top:804px;font-size:15.5px;letter-spacing:0.7px">StartApplication</div><svg class="a" style="left:235px;top:809px" width="10" height="10"><path d="M1 1l8 8M9 1l-8 8" stroke="#6E7072" stroke-width="1.3"/></svg><svg class="a" style="left:1824px;top:804px" width="18" height="18"><g fill="#AFB1B3"><circle cx="9" cy="9" r="5.6"/><path d="M7.4 1h3.2v3.6H7.4zM7.4 13.4h3.2V17H7.4z"/><path d="M7.4 1h3.2v3.6H7.4zM7.4 13.4h3.2V17H7.4z" transform="rotate(60 9 9)"/><path d="M7.4 1h3.2v3.6H7.4zM7.4 13.4h3.2V17H7.4z" transform="rotate(120 9 9)"/></g><circle cx="9" cy="9" r="2.3" fill="#3E3F41"/></svg><div class="a" style="left:18px;top:829px;width:1822px;height:1px;background:#323232"></div><div class="a" style="left:18px;top:830px;width:1822px;height:34px;background:#3E3F41"></div><div class="a" style="left:55px;top:830px;width:88px;height:34px;background:#4B4E50"></div><div class="a" style="left:143px;top:830px;width:102px;height:34px;background:#3C3E40"></div><div class="a" style="left:245px;top:831px;width:1px;height:33px;background:#393B3D"></div><div class="a" style="left:18px;top:830px;width:1822px;height:1px;background:#46484A"></div><div class="a" style="left:55px;top:864px;width:1785px;height:5px;background:#4B4E50"></div><div class="a" style="left:55px;top:869px;width:1785px;height:23px;background:#2B2B2B;overflow:hidden"><div class="a" style="left:0;top:0;width:35px;height:23px;background:#313335"></div><div class="a" style="left:51px;top:-6px;font-family:&quot;Liberation Mono&quot;,monospace;font-size:14px;letter-spacing:0.6px;line-height:21px;white-space:pre;color:#BBBBBB">[S] 2023-04-02 22:06:45.819 INFO  [org.springframework.boot.StartupInfoLogger.logStarted] - Started StartApplication in 6.743 seconds (JVM running for 9.329)</div></div><svg class="a" style="left:61px;top:840px" width="16" height="14"><rect x="0.5" y="0.5" width="15" height="13" fill="#AFB1B3"/><path d="M5 3.5l4 3.5-4 3.5" stroke="#4B4E50" stroke-width="1.8" fill="none"/></svg><div class="t" style="left:83px;top:837px;font-size:14px;letter-spacing:0.6px">Console</div><svg class="a" style="left:149px;top:837px" width="20" height="20"><path d="M1.5 9.5L4.5 16 10.5 4.5 15.5 16 18.5 9.5" stroke="#E08A2B" stroke-width="2.2" fill="none"/><circle cx="10.5" cy="4.5" r="2.8" fill="#E08A2B"/><circle cx="4.2" cy="15.5" r="2.8" fill="#E08A2B"/><circle cx="15.8" cy="15.5" r="2.8" fill="#E08A2B"/></svg><div class="t" style="left:171px;top:837px;font-size:14px;letter-spacing:0.6px">Endpoints</div><svg class="a" style="left:27px;top:840px" width="20" height="19"><path d="M14 5.2C8.5 3.8 3 6.5 3 11.5c0 2.6 1.4 4.5 3.2 5.5" stroke="#59A869" stroke-width="3" fill="none"/><path d="M11.5 0.5l6.5 5-6.5 5z" fill="#59A869"/><rect x="10" y="11.5" width="7" height="6.5" fill="#C9CBCD"/></svg><div class="a" style="left:30px;top:876px;width:12px;height:12px;background:#E05555"></div>
</body></html>
